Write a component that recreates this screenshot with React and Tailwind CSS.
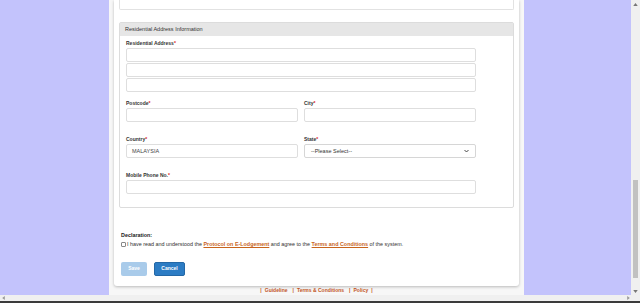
import React from 'react';

export default function App() {
    const font = { fontFamily: '"Liberation Sans", Arial, sans-serif' };

    return (
        <div className="w-[640px] h-[303px] overflow-hidden bg-[#f0f0f0] flex flex-col" style={font}>
            <div className="flex h-[295px]">
                {/* Page viewport */}
                <div className="w-[631px] h-full bg-[#c3c3fc] flex overflow-hidden">
                    <div className="w-[415px] ml-[109px] h-full bg-[#f7f7f7] flex flex-col items-center">
                        {/* CARD */}
                        <div className="w-[405px] h-[286px] bg-white shadow-[0_1px_3px_rgba(0,0,0,0.25)] rounded-b-[3px] px-[5px] flex flex-col">
                            {/* Previous section (scrolled) */}
                            <div className="h-[10px] border-x border-b border-[#e2e2e2] rounded-b-[2px]"></div>

                            {/* Residential Address Information */}
                            <div className="mt-[12px] h-[186px] border border-[#dcdcdc] rounded-[2px] flex flex-col">
                                <div className="h-[13px] bg-[#e6e6e6] flex items-center px-[5px] text-[5.5px] text-[#333]">
                                    Residential Address Information
                                </div>
                                <div className="px-[6px] pt-[4px] flex flex-col">
                                    <Label text="Residential Address" />
                                    <div className="flex flex-col gap-[1px] w-[350px]">
                                        <Input />
                                        <Input />
                                        <Input />
                                    </div>

                                    <div className="flex gap-[6px] mt-[8px]">
                                        <div className="flex flex-col w-[172px]">
                                            <Label text="Postcode" />
                                            <Input />
                                        </div>
                                        <div className="flex flex-col w-[172px]">
                                            <Label text="City" />
                                            <Input />
                                        </div>
                                    </div>

                                    <div className="flex gap-[6px] mt-[14px]">
                                        <div className="flex flex-col w-[172px]">
                                            <Label text="Country" />
                                            <Input value="MALAYSIA" />
                                        </div>
                                        <div className="flex flex-col w-[172px]">
                                            <Label text="State" />
                                            <div className="h-[14px] border border-[#d6d6d6] rounded-[2px] flex items-center justify-between px-[6px] text-[5.5px] text-[#333]">
                                                <span>--Please Select--</span>
                                                <svg width="5" height="4" viewBox="0 0 10 8">
                                                    <path d="M1 2 L5 6 L9 2" fill="none" stroke="#333" strokeWidth="1.8" />
                                                </svg>
                                            </div>
                                        </div>
                                    </div>

                                    <div className="flex flex-col mt-[14px] w-[350px]">
                                        <Label text="Mobile Phone No." />
                                        <Input />
                                    </div>
                                </div>
                            </div>

                            {/* Declaration */}
                            <div className="mt-[24px] px-[2px] text-[5.4px] text-[#333]">
                                <div className="font-bold text-[#222] leading-[7px]">Declaration:</div>
                                <div className="flex items-center leading-[8px] mt-[1px]">
                                    <span className="w-[5px] h-[5px] border border-[#888] rounded-[1px] mr-[1px] bg-white"></span>
                                    <span>
                                        I have read and understood the{' '}
                                        <span className="font-bold underline text-[#c8641c]">Protocol on E-Lodgement</span>
                                        {' '}and agree to the{' '}
                                        <span className="font-bold underline text-[#c8641c]">Terms and Conditions</span>
                                        {' '}of the system.
                                    </span>
                                </div>
                            </div>

                            {/* Buttons */}
                            <div className="mt-[14px] px-[2px] flex gap-[7px]">
                                <button className="w-[26px] h-[14px] rounded-[2px] bg-[#a9cbea] text-white text-[5px] font-bold">Save</button>
                                <button className="w-[31px] h-[14px] rounded-[2px] bg-[#2c7cc4] border border-[#2468a6] text-white text-[5px] font-bold">Cancel</button>
                            </div>
                        </div>

                        {/* Footer links */}
                        <div className="mt-[1px] text-[5px] font-bold text-[#c2551e] flex gap-[3px] leading-[7px]">
                            <span>|</span><span>Guideline</span>
                            <span className="ml-[2px]">|</span><span>Terms &amp; Conditions</span>
                            <span className="ml-[2px]">|</span><span>Policy</span><span>|</span>
                        </div>
                    </div>
                </div>

                {/* Vertical scrollbar */}
                <div className="w-[9px] h-full bg-[#f0f0f0] flex flex-col items-center">
                    <div className="h-[8px] flex items-center justify-center">
                        <svg width="5" height="3" viewBox="0 0 6 4"><path d="M0 4 L3 0 L6 4 Z" fill="#777" /></svg>
                    </div>
                    <div className="flex-1 w-full flex flex-col">
                        <div className="h-[172px]"></div>
                        <div className="h-[98px] mx-[2px] bg-[#c1c1c1]"></div>
                    </div>
                    <div className="h-[8px] flex items-center justify-center">
                        <svg width="5" height="3" viewBox="0 0 6 4"><path d="M0 0 L6 0 L3 4 Z" fill="#777" /></svg>
                    </div>
                </div>
            </div>

            {/* Horizontal scrollbar */}
            <div className="h-[6px] bg-[#f0f0f0] flex items-center justify-between px-[2px]">
                <svg width="3" height="4" viewBox="0 0 4 6"><path d="M4 0 L0 3 L4 6 Z" fill="#999" /></svg>
                <svg width="3" height="4" viewBox="0 0 4 6" className="mr-[8px]"><path d="M0 0 L4 3 L0 6 Z" fill="#999" /></svg>
            </div>
            <div className="h-[2px] bg-[#3b3b3b]"></div>
        </div>
    );
}

function Label({ text }) {
    return (
        <div className="text-[5px] font-bold text-[#333] leading-[7px] mb-[1px]">
            {text}<span className="text-[#e02020]">*</span>
        </div>
    );
}

function Input({ value }) {
    return (
        <div className="h-[14px] border border-[#dedede] rounded-[2px] flex items-center px-[5px] text-[5.5px] text-[#444] bg-white">
            {value}
        </div>
    );
}
